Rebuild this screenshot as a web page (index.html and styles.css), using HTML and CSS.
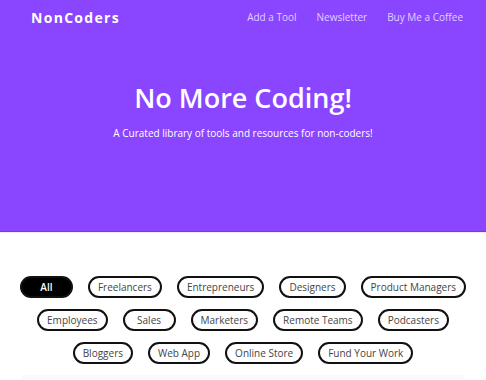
FILE: index.html
```html
<!DOCTYPE html>
<html lang="en">
<head>
    <meta charset="UTF-8">
    <meta name="viewport" content="width=device-width, initial-scale=1.0">
    <title>NonCoders</title>
    <link rel="stylesheet" href="styles.css">
</head>
<body>
    <header class="hero">
        <nav class="nav">
            <a class="logo" href="#">NonCoders</a>
            <div class="nav-links">
                <a href="#">Add a Tool</a>
                <a href="#">Newsletter</a>
                <a href="#">Buy Me a Coffee</a>
            </div>
        </nav>
        <h1>No More Coding!</h1>
        <p class="tagline">A Curated library of tools and resources for non-coders!</p>
    </header>

    <section class="filters">
        <button class="pill active">All</button>
        <button class="pill">Freelancers</button>
        <button class="pill">Entrepreneurs</button>
        <button class="pill">Designers</button>
        <button class="pill">Product Managers</button>
        <button class="pill">Employees</button>
        <button class="pill">Sales</button>
        <button class="pill">Marketers</button>
        <button class="pill">Remote Teams</button>
        <button class="pill">Podcasters</button>
        <button class="pill">Bloggers</button>
        <button class="pill">Web App</button>
        <button class="pill">Online Store</button>
        <button class="pill">Fund Your Work</button>
    </section>

    <div class="cards"></div>
</body>
</html>
```

FILE: styles.css
```css
body {
    margin: 0;
    font-family: "Open Sans", "Liberation Sans", sans-serif;
    background-color: #fff;
    overflow: hidden;
}
a {
    text-decoration: none;
}
.hero {
    background-color: #8a45ff;
    color: #fff;
    text-align: center;
    padding-bottom: 90px;
    border-bottom: 1px solid #7a38e6;
    box-shadow: 0 1px 0 #f4e8ff;
}
.nav {
    display: flex;
    justify-content: space-between;
    align-items: center;
    height: 34px;
    padding: 0 23px 0 31px;
}
.logo {
    color: #fff;
    font-size: 14px;
    font-weight: 700;
    letter-spacing: 1.3px;
}
.nav-links {
    display: flex;
    gap: 20px;
}
.nav-links a {
    color: #e2d0ff;
    font-size: 10px;
}
h1 {
    margin: 47px 0 0;
    font-size: 27px;
    font-weight: 600;
    line-height: 34px;
}
.tagline {
    margin: 10px 0 0;
    font-size: 10px;
    line-height: 16px;
}
.filters {
    display: flex;
    flex-wrap: wrap;
    justify-content: center;
    gap: 11px 15px;
    padding: 44px 16px 0;
}
.pill {
    min-width: 53px;
    height: 22px;
    padding: 0 8px;
    border: 2px solid #111;
    border-radius: 12px;
    background: #fff;
    color: #444;
    font-family: "Open Sans", "Liberation Sans", sans-serif;
    font-size: 10px;
    cursor: pointer;
}
.pill.active {
    background: #000;
    color: #fff;
    font-weight: 600;
}
.cards {
    margin: 11px 22px 0;
    height: 4px;
    background-color: #fafafa;
}
```
